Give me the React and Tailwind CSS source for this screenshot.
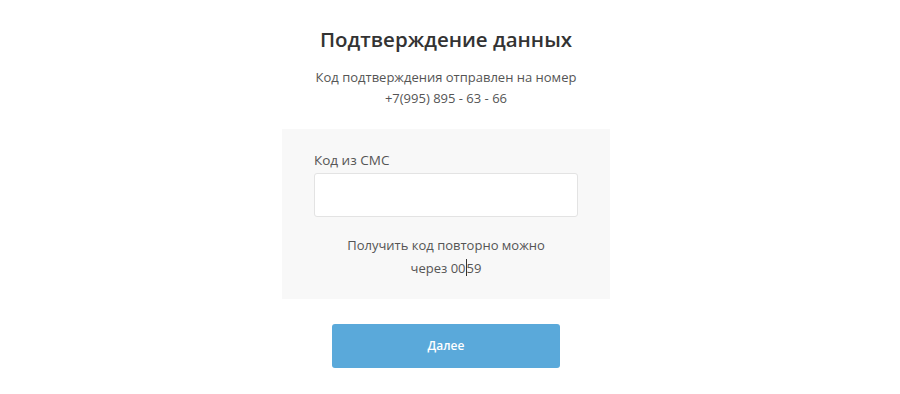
import React from "react";

const font = { fontFamily: '"Open Sans", "Noto Sans", sans-serif' };

export default function App() {
    return (
        <div className="min-h-[394px] w-[900px] bg-white" style={font}>
            <div className="ml-[282px] flex w-[328px] flex-col items-center pt-[24px]">
                <h1 className="text-[20.5px] leading-[30px] font-semibold text-[#333]">
                    Подтверждение данных
                </h1>
                <p className="mt-[13px] text-center text-[13px] leading-[21px] text-[#555]">
                    Код подтверждения отправлен на номер
                    <br />
                    +7(995) 895 - 63 - 66
                </p>

                <div className="mt-[20px] flex w-full flex-col items-center bg-[#f8f8f8] px-[32px] pt-[21px] pb-[20px]">
                    <label className="w-full text-[13.5px] leading-[20px] text-[#555]">Код из СМС</label>
                    <input
                        type="text"
                        className="mt-[3px] h-[44px] w-full rounded-[3px] border border-[#e3e3e3] bg-white outline-none"
                    />
                    <p className="mt-[17px] text-center text-[13px] leading-[22px] text-[#555]">
                        Получить код повторно можно
                        <br />
                        через 00<span className="inline-block h-[17px] w-px translate-y-[3px] bg-[#333]" />59
                    </p>
                </div>

                <button className="mt-[25px] h-[44px] w-[228px] rounded-[3px] bg-[#5aa9da] text-[12px] font-semibold text-white">
                    Далее
                </button>
            </div>
        </div>
    );
}
